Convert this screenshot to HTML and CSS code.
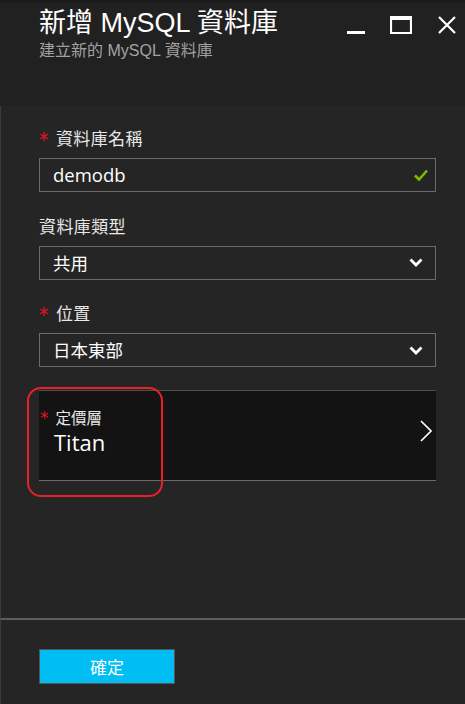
FILE: index.html
```html
<!DOCTYPE html>
<html lang="zh-Hant">
<head>
<meta charset="utf-8">
<title>新增 MySQL 資料庫</title>
<link rel="stylesheet" href="styles.css">
</head>
<body>
<div class="blade">
  <div class="topstrip"></div>
  <header class="header">
    <div class="titles">
      <div class="title">新增 MySQL 資料庫</div>
      <div class="subtitle">建立新的 MySQL 資料庫</div>
    </div>
    <div class="controls">
      <svg class="ctl ctl-min" width="18" height="18" viewBox="0 0 18 18"><rect x="0" y="15" width="18" height="3" fill="#fff"/></svg>
      <svg class="ctl ctl-max" width="22" height="18" viewBox="0 0 22 18"><path d="M1 1.5 H21 V17 H1 Z" fill="none" stroke="#fff" stroke-width="2.2"/><rect x="0" y="0" width="22" height="4" fill="#fff"/></svg>
      <svg class="ctl ctl-close" width="18" height="18" viewBox="0 0 18 18"><path d="M1 1 L17 17 M17 1 L1 17" stroke="#fff" stroke-width="2.2" fill="none"/></svg>
    </div>
  </header>
  <main class="content">
    <div class="field">
      <div class="label"><span class="req">*</span>資料庫名稱</div>
      <div class="control">
        <span class="value latin">demodb</span>
        <svg class="check" width="14" height="12" viewBox="0 0 14 12"><path d="M1 6.5 L5 10.5 L13 1.5" fill="none" stroke="#7fba00" stroke-width="2.6"/></svg>
      </div>
    </div>
    <div class="field">
      <div class="label">資料庫類型</div>
      <div class="control">
        <span class="value">共用</span>
        <svg class="chev" width="14" height="9" viewBox="0 0 14 9"><path d="M1.5 1.5 L7 7 L12.5 1.5" fill="none" stroke="#fff" stroke-width="2.8"/></svg>
      </div>
    </div>
    <div class="field">
      <div class="label"><span class="req">*</span>位置</div>
      <div class="control">
        <span class="value">日本東部</span>
        <svg class="chev" width="14" height="9" viewBox="0 0 14 9"><path d="M1.5 1.5 L7 7 L12.5 1.5" fill="none" stroke="#fff" stroke-width="2.8"/></svg>
      </div>
    </div>
    <div class="tier">
      <div class="tier-text">
        <div class="tier-label"><span class="req">*</span>定價層</div>
        <div class="tier-value latin">Titan</div>
      </div>
      <svg class="chev-right" width="12" height="22" viewBox="0 0 12 22"><path d="M1 1 L11 11 L1 21" fill="none" stroke="#fff" stroke-width="1.6"/></svg>
      <div class="annot"></div>
    </div>
  </main>
  <footer class="footer">
    <button class="ok">確定</button>
  </footer>
</div>
</body>
</html>
```

FILE: styles.css
```css
html, body {
  margin: 0;
  padding: 0;
  background: #252525;
}
body {
  font-family: "Noto Sans CJK TC", "Noto Sans", sans-serif;
  color: #e6e6e6;
}
.latin {
  font-family: "Open Sans", "Noto Sans CJK TC", sans-serif;
}
.blade {
  width: 465px;
  height: 704px;
  display: flex;
  flex-direction: column;
  background: #252525;
}
.topstrip {
  height: 3px;
  background: #1b1b1b;
}
.header {
  height: 103px;
  background: #212121;
  display: flex;
  justify-content: space-between;
  align-items: flex-start;
  padding: 0 9px 0 39px;
  box-sizing: border-box;
}
.titles {
  padding-top: 3px;
  font-family: "Liberation Sans", "Noto Sans CJK TC", sans-serif;
}
.title {
  font-size: 27px;
  line-height: 34px;
  color: #ffffff;
  font-weight: 400;
  white-space: nowrap;
}
.subtitle {
  font-size: 16px;
  line-height: 18px;
  margin-top: 2px;
  color: #a3a3a3;
  white-space: nowrap;
}
.controls {
  display: flex;
  align-items: flex-start;
  padding-top: 13px;
}
.ctl { display: block; }
.ctl-min { margin-right: 25px; }
.ctl-max { margin-right: 26px; }
.content {
  flex: 1;
  border-left: 1px solid #3d3d3d;
  padding: 22px 29px 0 38px;
  display: flex;
  flex-direction: column;
}
.field {
  margin-bottom: 23.5px;
}
.label {
  font-size: 17px;
  line-height: 20px;
  letter-spacing: 0.4px;
  color: #e8e8e8;
  height: 20px;
  margin-bottom: 10px;
  display: flex;
  align-items: center;
}
.req {
  color: #e81123;
  font-family: "DejaVu Sans", sans-serif;
  font-size: 19px;
  line-height: 20px;
  margin-left: 0;
  margin-right: 7px;
  position: relative;
  top: 1px;
}
.control {
  height: 34px;
  border: 1px solid #6b6b6b;
  box-sizing: border-box;
  display: flex;
  align-items: center;
  justify-content: space-between;
  padding: 0 12px 0 13px;
}
.value {
  font-size: 17.5px;
  color: #ffffff;
  line-height: 32px;
}
.value.latin {
  font-size: 18.5px;
}
.check { display: block; margin-right: -5px; }
.chev { display: block; }
.tier {
  position: relative;
  margin-top: -0.5px;
  height: 91px;
  background: #131313;
  border-top: 1px solid #4e4e4e;
  border-bottom: 1px solid #6b6b6b;
  box-sizing: border-box;
  display: flex;
  align-items: center;
  justify-content: space-between;
  padding: 0 4px 0 1px;
}
.tier-text {
  align-self: flex-start;
  padding-top: 16px;
}
.tier-label {
  font-size: 15.5px;
  line-height: 20px;
  color: #e8e8e8;
  display: flex;
  align-items: center;
}
.tier-label .req {
  font-size: 17px;
  margin-right: 7px;
}
.tier-value {
  font-size: 22px;
  line-height: 28px;
  color: #ffffff;
  padding-left: 14px;
  margin-top: 1px;
}
.chev-right {
  display: block;
  margin-top: -10px;
}
.annot {
  position: absolute;
  left: -12px;
  top: -4px;
  width: 136px;
  height: 110px;
  border: 2.5px solid #e8202a;
  border-radius: 14px;
  box-sizing: border-box;
}
.footer {
  border-top: 2px solid #5e5e5e;
  border-left: 1px solid #3d3d3d;
  height: 86px;
  box-sizing: border-box;
  padding: 29px 0 0 38px;
}
.ok {
  width: 136px;
  height: 35px;
  background: #00bdf3;
  border: 1px solid #555;
  color: #ffffff;
  font-family: "Noto Sans CJK TC", sans-serif;
  font-size: 17px;
  padding: 0;
  margin: 0;
  cursor: pointer;
}
```
